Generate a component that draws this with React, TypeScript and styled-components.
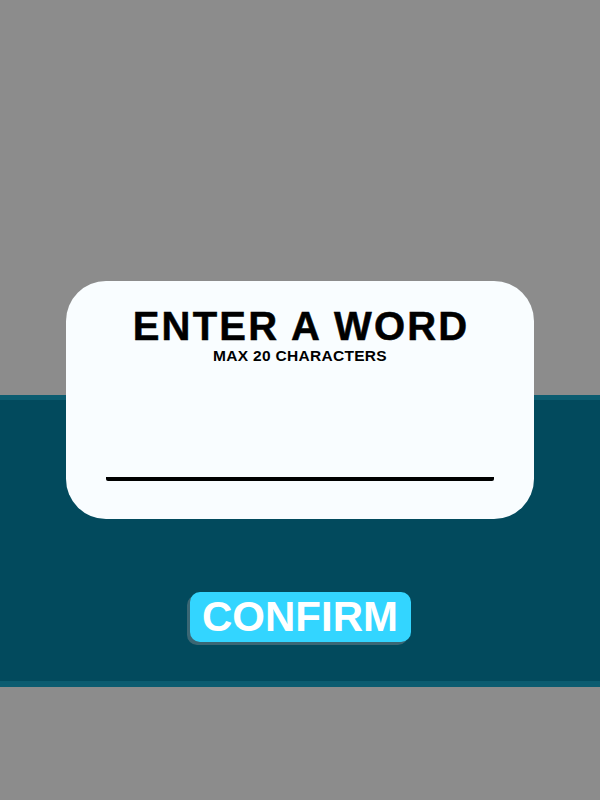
import React, { useState } from 'react';
import styled, { createGlobalStyle } from 'styled-components';

const GlobalStyle = createGlobalStyle`
  html, body {
    margin: 0;
    padding: 0;
    background: #8c8c8c;
  }
  body {
    font-family: 'Liberation Sans', Arial, sans-serif;
  }
`;

const App: React.FC = () => {
  const [word, setWord] = useState('');

  return (
    <>
      <GlobalStyle />
      <Stage>
        <WordCard>
          <Title>ENTER A WORD</Title>
          <Hint>MAX 20 CHARACTERS</Hint>
          <WordInput
            value={word}
            maxLength={20}
            onChange={(e) => setWord(e.target.value)}
          />
        </WordCard>
        <ConfirmButton>CONFIRM</ConfirmButton>
      </Stage>
    </>
  );
};

// the teal band behind the card is just a background stripe
const Stage = styled.div`
  width: 600px;
  height: 800px;
  box-sizing: border-box;
  padding-top: 281px;
  display: flex;
  flex-direction: column;
  align-items: center;
  background: linear-gradient(
    to bottom,
    #8c8c8c 0 395px,
    #0c5c70 395px 400px,
    #024a5d 400px 681px,
    #0c5c70 681px 687px,
    #8c8c8c 687px
  );
`;

const WordCard = styled.div`
  width: 468px;
  height: 238px;
  box-sizing: border-box;
  background: #f9fdff;
  border-radius: 40px;
  display: flex;
  flex-direction: column;
  align-items: center;
  padding-top: 24px;
`;

const Title = styled.div`
  font-size: 40px;
  font-weight: 700;
  line-height: 42px;
  letter-spacing: 2.2px;
  margin-right: -2.2px;
  -webkit-text-stroke: 0.5px #000;
  color: #000;
`;

const Hint = styled.div`
  font-size: 15.5px;
  font-weight: 700;
  line-height: 18px;
  letter-spacing: 0.3px;
  color: #000;
`;

const WordInput = styled.input`
  width: 388px;
  margin-top: 82px;
  border: none;
  border-bottom: 4px solid #000;
  border-radius: 2px;
  background: transparent;
  outline: none;
  height: 30px;
  padding: 0;
  font-family: inherit;
  font-size: 28px;
  font-weight: 700;
  text-align: center;
`;

const ConfirmButton = styled.button`
  margin-top: 73px;
  width: 221px;
  height: 50px;
  border: none;
  border-radius: 10px;
  background: #33d5ff;
  box-shadow: -3px 3px 0 #3b6774;
  color: #fff;
  font-family: 'Liberation Sans', Arial, sans-serif;
  font-size: 42px;
  font-weight: 700;
  line-height: 50px;
  padding: 0;
  cursor: pointer;
`;

export default App;
